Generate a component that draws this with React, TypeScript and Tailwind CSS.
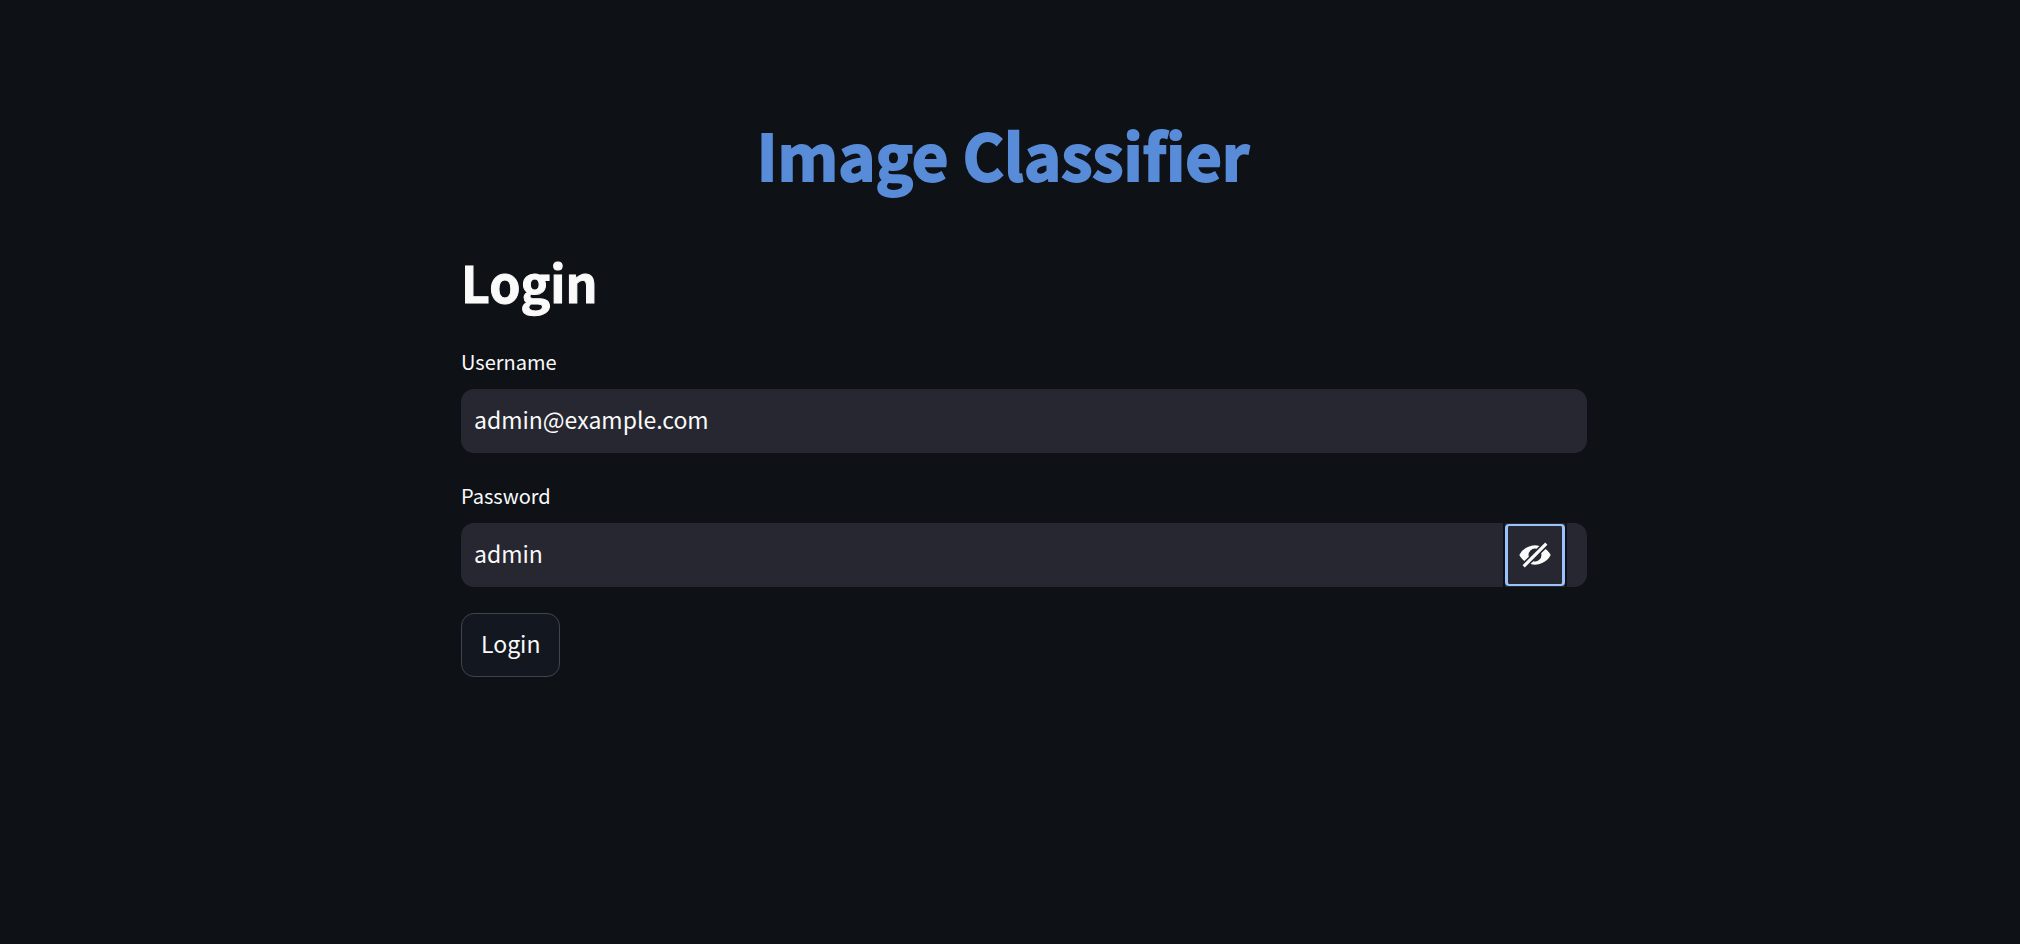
import { useState } from "react";
import type { InputHTMLAttributes, ReactNode } from "react";

type FieldProps = InputHTMLAttributes<HTMLInputElement> & {
  id: string;
  label: string;
  children?: ReactNode;
};

function Field({ id, label, children, ...input }: FieldProps) {
  return (
    <div className="flex flex-col gap-[13px]">
      <label htmlFor={id} className="self-start text-[20px] leading-[28px]">
        {label}
      </label>
      <div className="flex h-[64px] overflow-hidden rounded-[13px] bg-[#262730]">
        <input
          id={id}
          className="min-w-0 flex-1 bg-transparent px-[13px] pb-1 text-[23px] leading-[36px] outline-none"
          {...input}
        />
        {children}
      </div>
    </div>
  );
}

function HiddenEye() {
  return (
    <svg viewBox="0 0 20 20" className="size-8" fill="#fafafa" aria-hidden="true">
      <path d="M12.81 4.36l-1.77 1.78a4 4 0 00-4.9 4.9l-2.76 2.75C2.06 12.79.96 11.49.2 10a11 11 0 0112.6-5.64zm3.8 1.85c1.33 1 2.43 2.3 3.2 3.79a11 11 0 01-12.62 5.64l1.77-1.78a4 4 0 004.9-4.9l2.76-2.75zm-.25-3.99l1.42 1.42L3.64 17.78l-1.42-1.42L16.36 2.22z" />
    </svg>
  );
}

export default function App() {
  const [visible, setVisible] = useState(true);
  return (
    <main className="min-h-screen bg-[#0e1116] pt-[114px] pr-6 pl-[52px] font-['Noto_Sans_CJK_SC',sans-serif] text-[#fafafa]">
      <div className="mx-auto max-w-[1126px]">
        <h1 className="pr-[42px] text-center text-[63px] leading-[80px] font-bold text-[#588bd8] [-webkit-text-stroke:2px_#588bd8]">
          Image Classifier
        </h1>
        <h2 className="mt-[55px] text-[50px] leading-[64px] font-bold [-webkit-text-stroke:1px_#fafafa]">
          Login
        </h2>
        <form className="mt-[35px] flex flex-col gap-[29px]" onSubmit={(e) => e.preventDefault()}>
          <Field id="username" label="Username" type="text" defaultValue="admin@example.com" />
          <Field id="password" label="Password" type={visible ? "text" : "password"} defaultValue="admin">
            <button
              type="button"
              aria-label={visible ? "Hide password" : "Show password"}
              onClick={() => setVisible(!visible)}
              className="mr-[20px] flex w-[64px] items-center justify-center border-x-2 border-[#101116]"
            >
              <span className="flex h-[62px] w-[60px] shrink-0 items-center justify-center rounded-[4px] border-2 border-x-3 border-[#99c3fa]">
                <HiddenEye />
              </span>
            </button>
          </Field>
          <button
            type="submit"
            className="-mt-[3px] h-[64px] self-start rounded-[13px] border border-[#41444c] bg-[#131720] px-[19px] pb-1 text-[23px] leading-[36px]"
          >
            Login
          </button>
        </form>
      </div>
    </main>
  );
}
